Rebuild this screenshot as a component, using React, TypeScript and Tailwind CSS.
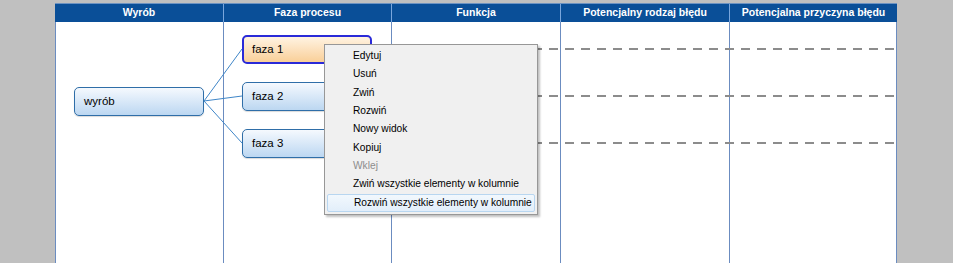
import React from "react";

const cols = [
  { name: "Wyrób", w: "w-[168px]" },
  { name: "Faza procesu", w: "w-[168px]" },
  { name: "Funkcja", w: "w-[169px]" },
  { name: "Potencjalny rodzaj błędu", w: "w-[169px]" },
  { name: "Potencjalna przyczyna błędu", w: "w-[168px]" },
];

const menuItems = [
  { t: "Edytuj" },
  { t: "Usuń" },
  { t: "Zwiń" },
  { t: "Rozwiń" },
  { t: "Nowy widok" },
  { t: "Kopiuj" },
  { t: "Wklej", disabled: true },
  { t: "Zwiń wszystkie elementy w kolumnie" },
  { t: "Rozwiń wszystkie elementy w kolumnie", active: true },
];

function Node({ label, selected }: { label: string; selected?: boolean }) {
  return (
    <div
      className={
        selected
          ? "h-[29px] w-[130px] rounded-[5px] border-2 border-[#2a2ad8] bg-gradient-to-b from-[#fff3e2] to-[#f9cf98] flex items-center pl-[8px] text-[11.5px] text-black"
          : "h-[29px] w-[130px] rounded-[5px] border border-[#2f6ea8] bg-gradient-to-b from-[#f5f9fe] to-[#bcd7f1] flex items-center pl-[9px] text-[11.5px] text-black shadow-[0_1px_1px_rgba(0,0,0,0.15)]"
      }
      style={{ fontFamily: '"Liberation Sans", Arial, sans-serif' }}
    >
      {label}
    </div>
  );
}

export default function App() {
  return (
    <div className="w-[953px] h-[263px] bg-[#c0c0c0] overflow-hidden pt-[3px] flex">
      <div className="w-[55px] shrink-0" />
      <div className="w-[842px] shrink-0 flex flex-col relative">
        {/* header */}
        <div className="flex h-[19px] bg-[#0a4f98] border-t border-[#6d93c2]">
          {cols.map((c, i) => (
            <div
              key={c.name}
              className={`${c.w} shrink-0 flex items-center justify-center text-white font-bold text-[10.5px] ${
                i > 0 ? "border-l border-[#7aa6dc]" : ""
              }`}
              style={{ fontFamily: '"Liberation Sans", Arial, sans-serif' }}
            >
              {c.name}
            </div>
          ))}
        </div>
        {/* body */}
        <div className="flex flex-1 bg-white relative">
          <div className="w-[168px] shrink-0 border-l border-[#6b8cc0] pt-[65px] pl-[18px]">
            <Node label="wyrób" />
          </div>
          <div className="w-[168px] shrink-0 border-l border-[#6b8cc0] pt-[13px] pl-[18px] flex flex-col gap-[18px]">
            <Node label="faza 1" selected />
            <Node label="faza 2" />
            <Node label="faza 3" />
          </div>
          <div className="w-[169px] shrink-0 border-l border-[#6b8cc0]" />
          <div className="w-[169px] shrink-0 border-l border-[#6b8cc0]" />
          <div className="w-[168px] shrink-0 border-l border-r border-[#6b8cc0]" />

          {/* connectors & dashed lines overlay */}
          <svg
            className="absolute left-0 top-0 pointer-events-none"
            width="842"
            height="241"
          >
            <g stroke="#3f86c8" strokeWidth="1" fill="none">
              <line x1="149" y1="79" x2="187" y2="27" />
              <line x1="149" y1="79" x2="187" y2="74" />
              <line x1="149" y1="79" x2="187" y2="121" />
            </g>
            <g stroke="#8c8c8c" strokeWidth="2" strokeDasharray="9 7">
              <line x1="318" y1="27" x2="841" y2="27" />
              <line x1="318" y1="74" x2="841" y2="74" />
              <line x1="318" y1="121" x2="841" y2="121" />
            </g>
          </svg>

          {/* context menu */}
          <div
            className="absolute left-[269px] top-[22px] w-[214px] h-[171px] bg-[#f0f0f0] border border-[#979797] shadow-[2px_2px_2px_rgba(0,0,0,0.25)] py-[2px] px-[2px] flex flex-col"
            style={{ fontFamily: '"Liberation Sans", Arial, sans-serif' }}
          >
            {menuItems.map((m) => (
              <div
                key={m.t}
                className={`h-[18.6px] flex items-center whitespace-nowrap pl-[26px] text-[10.2px] leading-none rounded-[2px] ${
                  m.disabled ? "text-[#8d8d8d]" : "text-black"
                } ${
                  m.active
                    ? "border border-[#b8d6f0] bg-gradient-to-b from-[#f2f8fd] to-[#e2eefa] pl-[25px]"
                    : ""
                }`}
              >
                {m.t}
              </div>
            ))}
          </div>
        </div>
      </div>
      <div className="flex-1" />
    </div>
  );
}
